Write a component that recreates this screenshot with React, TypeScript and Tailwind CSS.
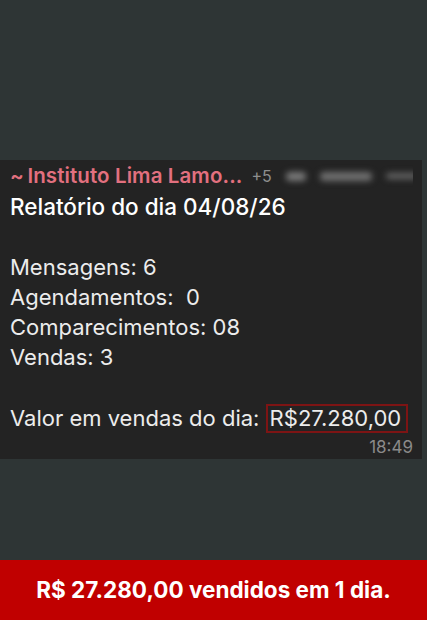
export default function App() {
  return (
    <div className="flex h-[620px] w-[427px] flex-col bg-[#2e3535]" style={{ fontFamily: "Inter, 'Noto Sans', sans-serif" }}>
      <div className="h-[160px]" />

      {/* message bubble */}
      <div className="mr-[5px] h-[299px] bg-[#232323] pl-[10px] pr-[9px] pt-[3px]">
        <div className="flex h-[26px] items-center overflow-hidden whitespace-nowrap">
          <span className="shrink-0 text-[20.5px] font-semibold tracking-[0.1px] text-[#e2707f]">~&thinsp;Instituto Lima Lamo...</span>
          <span className="ml-[9px] shrink-0 text-[16px] text-[#8e8e8e]">+5</span>
          <div className="ml-[14px] flex shrink-0 items-center gap-[14px] blur-[3px]">
            <div className="h-[9px] w-[20px] rounded bg-[#7a7a7a]" />
            <div className="h-[9px] w-[52px] rounded bg-[#707070]" />
            <div className="h-[6px] w-[32px] rounded bg-[#666]" />
          </div>
        </div>
        <div className="mt-[2px] whitespace-nowrap text-[22.5px] font-medium leading-[32px] text-white">Relatório do dia 04/08/26</div>

        <div className="mt-[29px] whitespace-nowrap text-[22px] leading-[30px] text-[#ececec]">
          <div>Mensagens: 6</div>
          <div>Agendamentos:&nbsp; 0</div>
          <div>Comparecimentos: 08</div>
          <div>Vendas: 3</div>
          <div className="mt-[31px] flex h-[30px] items-center">
            <span className="shrink-0">Valor em vendas do dia:&nbsp;</span>
            <span className="flex h-[29px] shrink-0 items-center border-2 border-[#7d1414] pl-[2px] pr-[5px] leading-[26px]">R$27.280,00</span>
          </div>
        </div>
        <div className="mt-[4px] text-right text-[17px] leading-[20px] text-[#8a8a8a]">18:49</div>
      </div>

      <div className="flex-1" />

      <div className="flex h-[60px] items-center justify-center bg-[#c00000]">
        <span className="whitespace-nowrap text-[22.5px] font-bold text-white">R$ 27.280,00 vendidos em 1 dia.</span>
      </div>
    </div>
  );
}
